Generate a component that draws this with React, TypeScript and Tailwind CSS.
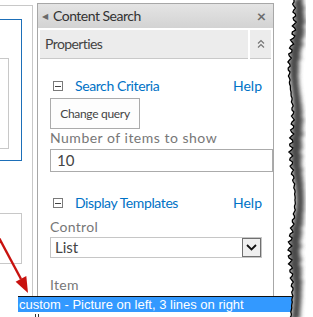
import React from "react";

function MinusBox() {
  return (
    <span className="flex h-[10px] w-[10px] shrink-0 items-center justify-center border border-[#7a7a7a] bg-white">
      <span className="block h-px w-[6px] bg-[#444]" />
    </span>
  );
}

function SectionRow({ title }: { title: string }) {
  return (
    <div className="flex h-[20px] items-center pl-[3px]">
      <MinusBox />
      <span className="ml-[12px] text-[14px] leading-[20px] tracking-[-0.4px] text-[#0072c6]">{title}</span>
      <span className="ml-auto text-[14px] leading-[20px] text-[#0072c6]">Help</span>
    </div>
  );
}

function TornEdge() {
  const pts: [number, number][] = [];
  for (let y = -2; y <= 320; y += 2) {
    const n =
      Math.sin(y * 0.9) * 1.1 +
      Math.sin(y * 2.3 + 1) * 0.9 +
      Math.sin(y * 0.07) * 1.8 +
      Math.sin(y * 0.031 + 2) * 1.4;
    pts.push([12 + n, y]);
  }
  const line = pts.map(([x, y]) => `${x.toFixed(1)},${y}`).join(" ");
  const area = `${line} 40,320 40,-2`;
  return (
    <svg className="absolute left-[280px] top-0 h-[317px] w-[33px]" viewBox="0 0 33 317">
      <defs>
        <clipPath id="paper">
          <polygon points={area} />
        </clipPath>
        <filter id="soft" x="-50%" y="-10%" width="200%" height="120%">
          <feGaussianBlur stdDeviation="2.2" />
        </filter>
      </defs>
      <polygon points={area} fill="#ffffff" />
      <g clipPath="url(#paper)">
        <polyline
          points={line}
          transform="translate(5 0)"
          fill="none"
          stroke="#4a4a4a"
          strokeWidth="8"
          filter="url(#soft)"
        />
      </g>
      <polyline points={line} fill="none" stroke="#000" strokeWidth="1.3" />
    </svg>
  );
}

export default function App() {
  return (
    <div className="relative h-[317px] w-[313px] overflow-hidden bg-white font-['Lato','Open_Sans',sans-serif]">
      <div className="flex h-full">
        {/* page zones behind the tool pane */}
        <div className="w-[37px] shrink-0 pt-[5px]">
          <div className="h-[291px] w-[33px] border-t border-r border-[#c8c8c8] pt-[13px]">
            <div className="h-[142px] w-[22px] border-t border-r border-b border-[#1d6fb8] pt-[38px]">
              <div className="h-[91px] w-[9px] border-t border-r border-b border-[#c8c8c8]" />
            </div>
            <div className="mt-[52px] h-[51px] w-[22px] border-t border-r border-b border-[#c8c8c8]" />
          </div>
        </div>

        {/* tool pane */}
        <div className="mt-[3px] h-[293px] w-[237px] shrink-0 border-x border-[#a7a7a7]">
          <div className="flex h-[25px] items-center border-t border-[#a7a7a7] bg-gradient-to-b from-[#e4e4e4] to-[#d3d3d3] pl-[4px] pr-[7px]">
            <span className="text-[8px] leading-none text-[#6a6a6a]">◀</span>
            <span className="ml-[5px] text-[14px] leading-[20px] tracking-[-0.5px] text-[#333]">Content Search</span>
            <span className="ml-auto text-[16px] font-bold leading-none text-[#6b6b6b]">×</span>
          </div>

          <div className="mt-[2px] flex gap-[2px] px-[2px]">
            <div className="flex h-[29px] w-[208px] items-center border-b border-[#c9c9c9] bg-[#ececec] pl-[5px]">
              <span className="text-[14px] leading-[20px] tracking-[-0.6px] text-[#444]">Properties</span>
            </div>
            <div className="flex h-[29px] w-[21px] flex-col items-center justify-center border-b border-[#c9c9c9] bg-[#ececec]">
              <svg width="8" height="10" viewBox="0 0 8 10" fill="none" stroke="#777" strokeWidth="1.2">
                <polyline points="1,4.5 4,1.5 7,4.5" />
                <polyline points="1,8.5 4,5.5 7,8.5" />
              </svg>
            </div>
          </div>

          <div className="pl-[12px] pr-[11px] pt-[17px]">
            <SectionRow title="Search Criteria" />
            <button className="mt-[2px] flex h-[31px] w-[90px] items-center justify-center border border-[#ababab] bg-[#fdfdfd] text-[12px] tracking-[-0.3px] text-[#444]">
              Change query
            </button>
            <div className="text-[14px] leading-[18px] tracking-[0.5px] text-[#777]">Number of items to show</div>
            <div className="-mr-[11px] mt-[2px] flex h-[23px] items-center border border-[#ababab] pl-[6px] text-[15px] text-[#444]">
              10
            </div>

            <div className="mt-[21px]">
              <SectionRow title="Display Templates" />
            </div>
            <div className="mt-[5px] text-[14px] leading-[18px] tracking-[0.3px] text-[#777]">Control</div>
            <div className="mt-px flex h-[21px] items-center border border-[#c6c6c6] pl-[4px]">
              <span className="text-[15px] text-[#444]">List</span>
              <span className="ml-auto flex h-[19px] w-[19px] items-center justify-center border border-[#707070] bg-[#efefef]">
                <svg width="11" height="7" viewBox="0 0 11 7" fill="none" stroke="#111" strokeWidth="1.8">
                  <polyline points="1,1 5.5,5.5 10,1" />
                </svg>
              </span>
            </div>
            <div className="mt-[18px] text-[14px] leading-[18px] tracking-[0.3px] text-[#777]">Item</div>
          </div>
        </div>
      </div>

      {/* callout arrow */}
      <svg className="absolute left-0 top-[232px] h-[64px] w-[34px]" viewBox="0 0 34 64">
        <line x1="-2" y1="4" x2="21" y2="47" stroke="#c8120f" strokeWidth="2.4" />
        <polygon points="15.6,49.8 26.3,44 28,61" fill="#c8120f" />
      </svg>

      {/* open dropdown list */}
      <div className="absolute left-[18px] top-[296px] w-[282px] border-t border-[#111]">
        <div className="h-[15px] bg-[#3399ff] pl-px font-['Liberation_Sans',Arial,sans-serif] text-[13px] leading-[15px] text-white">
          custom - Picture on left, 3 lines on right
        </div>
        <div className="flex h-[6px] gap-[2px] bg-white pl-[17px] pt-[2px]">
          <span className="block h-[3px] w-px bg-[#333]" />
          <span className="block h-[3px] w-px bg-[#333]" />
        </div>
      </div>

      <TornEdge />
    </div>
  );
}
